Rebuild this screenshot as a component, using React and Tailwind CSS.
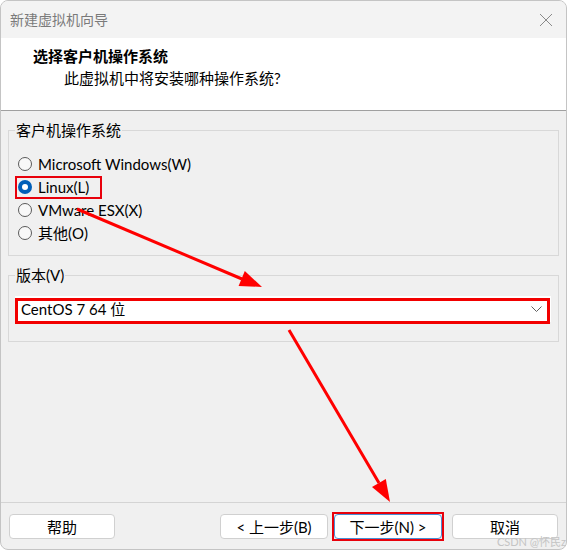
import React from "react";

const FONT = { fontFamily: 'Lato, "Noto Sans CJK SC", sans-serif' };

function Radio({ checked, label }) {
  return (
    <div className="flex items-center h-[23px]">
      {checked ? (
        <span className="w-[14px] h-[14px] rounded-full bg-[#005fb8] flex items-center justify-center">
          <span className="w-[6px] h-[6px] rounded-full bg-white" />
        </span>
      ) : (
        <span className="w-[14px] h-[14px] rounded-full border border-[#5a5a5a] bg-[#f8f8f8]" />
      )}
      <span className="ml-[6px] text-[15px] leading-[20px] text-black">{label}</span>
    </div>
  );
}

function Btn({ children, def }) {
  return (
    <div
      className={
        "h-[25px] rounded-[4px] bg-white flex items-center justify-center text-[15px] leading-[20px] text-black " +
        (def ? "border border-[#4a8fd4]" : "border border-[#d0d0d0]")
      }
    >
      {children}
    </div>
  );
}

export default function App() {
  return (
    <div className="w-[570px] h-[551px] bg-white relative overflow-hidden" style={FONT}>
      <div className="w-[567px] h-[550px] border border-[#c4c4c4] rounded-[8px] bg-[#f0f0f0] flex flex-col overflow-hidden">
        {/* title bar */}
        <div className="h-[37px] bg-[#f3f3f3] flex items-center justify-between pl-[9px] pr-[13px] shrink-0">
          <span className="text-[14px] leading-[18px] text-[#7a7a7a]">新建虚拟机向导</span>
          <svg width="14" height="14" viewBox="0 0 14 14">
            <path d="M1 1 L13 13 M13 1 L1 13" stroke="#8a8a8a" strokeWidth="1" fill="none" />
          </svg>
        </div>
        {/* header */}
        <div className="h-[73px] bg-white border-b border-[#a0a0a0] pt-[8px] pl-[32px] shrink-0">
          <div className="text-[15px] leading-[20px] font-bold text-black">选择客户机操作系统</div>
          <div className="mt-[2px] pl-[31px] text-[15px] leading-[20px] text-black">此虚拟机中将安装哪种操作系统?</div>
        </div>
        {/* body */}
        <div className="flex-1 px-[7px]">
          <fieldset className="mt-[10px] border border-[#d8d8d8] pl-[6px] pr-[6px] pb-[11px]">
            <legend className="px-[1px] text-[15px] leading-[18px] text-black">客户机操作系统</legend>
            <div className="pt-[13px] pl-[3px]">
              <Radio label="Microsoft Windows(W)" />
              <Radio checked label="Linux(L)" />
              <Radio label="VMware ESX(X)" />
              <Radio label="其他(O)" />
            </div>
          </fieldset>
          <fieldset className="mt-[10px] border border-[#d8d8d8] pl-[6px] pr-[7px] pb-[19px]">
            <legend className="px-[1px] text-[15px] leading-[18px] text-black">版本(V)</legend>
            <div className="mt-[12px] h-[26px] bg-white flex items-center justify-between pl-[6px] pr-[9px]">
              <span className="text-[15px] leading-[20px] text-black">CentOS 7 64 位</span>
              <svg width="11" height="6" viewBox="0 0 11 6">
                <path d="M0.5 0.5 L5.5 5.5 L10.5 0.5" stroke="#606060" strokeWidth="1" fill="none" />
              </svg>
            </div>
          </fieldset>
        </div>
        {/* footer */}
        <div className="h-[47px] border-t border-[#d4d4d4] shrink-0 flex items-start pt-[11px] pl-[8px] pr-[8px]">
          <div className="w-[106px]"><Btn>帮助</Btn></div>
          <div className="flex-1" />
          <div className="w-[108px]"><Btn>&lt; 上一步(B)</Btn></div>
          <div className="w-[108px] ml-[6px]"><Btn def>下一步(N) &gt;</Btn></div>
          <div className="w-[106px] ml-[10px]"><Btn>取消</Btn></div>
        </div>
      </div>

      {/* annotations */}
      <div className="absolute left-[15px] top-[176px] w-[87px] h-[23px] border-2 border-[#e8000b]" />
      <div className="absolute left-[15px] top-[298px] w-[535px] h-[26px] border-[3px] border-[#f20000]" />
      <div className="absolute left-[332px] top-[512px] w-[112px] h-[29px] border-2 border-[#e8000b]" />
      <svg className="absolute left-0 top-0" width="570" height="551" viewBox="0 0 570 551">
        <line x1="77" y1="209" x2="242" y2="279" stroke="#ff0000" strokeWidth="3" />
        <polygon points="262,287 238.6,285.9 244.8,271.1" fill="#ff0000" />
        <line x1="289" y1="330" x2="379" y2="483" stroke="#ff0000" strokeWidth="3" />
        <polygon points="390,502 372,487.1 385.8,479" fill="#ff0000" />
      </svg>
      <div className="absolute right-[4px] top-[536px] text-[11px] leading-[12px] text-[#c4c4c4]">CSDN @怀民z</div>
    </div>
  );
}
